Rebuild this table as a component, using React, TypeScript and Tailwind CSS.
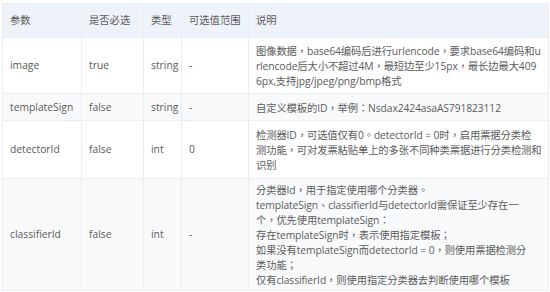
const rows = [
  {
    name: "image",
    required: "true",
    type: "string",
    range: "-",
    desc: [
      "图像数据，base64编码后进行urlencode，要求base64编码和u",
      "rlencode后大小不超过4M，最短边至少15px，最长边最大409",
      "6px,支持jpg/jpeg/png/bmp格式",
    ],
    h: "h-[56px]",
    bg: "bg-white",
  },
  {
    name: "templateSign",
    required: "false",
    type: "string",
    range: "-",
    desc: ["自定义模板的ID，举例：Nsdax2424asaAS791823112"],
    h: "h-[27px]",
    bg: "bg-[#f9fafc]",
  },
  {
    name: "detectorId",
    required: "false",
    type: "int",
    range: "0",
    desc: [
      "检测器ID，可选值仅有0。detectorId = 0时，启用票据分类检",
      "测功能，可对发票粘贴单上的多张不同种类票据进行分类检测和",
      "识别",
    ],
    h: "h-[58px]",
    bg: "bg-white",
  },
  {
    name: "classifierId",
    required: "false",
    type: "int",
    range: "-",
    desc: [
      "分类器Id，用于指定使用哪个分类器。",
      "templateSign、classifierId与detectorId需保证至少存在一",
      "个，优先使用templateSign：",
      "存在templateSign时，表示使用指定模板；",
      "如果没有templateSign而detectorId = 0，则使用票据检测分",
      "类功能；",
      "仅有classifierId，则使用指定分类器去判断使用哪个模板",
    ],
    h: "h-[112px]",
    bg: "bg-[#f9fafc]",
  },
];

const cell = "border border-[#eaedf1] px-[7px] align-middle";

export default function App() {
  return (
    <div className="h-[292px] w-[550px] overflow-hidden bg-white pl-[2px] pt-[3px] font-['Open_Sans','Noto_Sans_CJK_TC',sans-serif] text-[10.3px] leading-[15px] text-[#5a5a5a]">
      <table className="w-[546px] table-fixed border-collapse">
        <colgroup>
          <col className="w-[79px]" />
          <col className="w-[62px]" />
          <col className="w-[38px]" />
          <col className="w-[67px]" />
          <col className="w-[300px]" />
        </colgroup>
        <thead>
          <tr className="h-[34px] bg-[#eef3f9]">
            <th className={`${cell} text-left font-normal`}>参数</th>
            <th className={`${cell} text-left font-normal`}>是否必选</th>
            <th className={`${cell} text-left font-normal`}>类型</th>
            <th className={`${cell} whitespace-nowrap text-left font-normal`}>可选值范围</th>
            <th className={`${cell} text-left font-normal`}>说明</th>
          </tr>
        </thead>
        <tbody>
          {rows.map((r) => (
            <tr key={r.name} className={`${r.h} ${r.bg}`}>
              <td className={cell}>{r.name}</td>
              <td className={cell}>{r.required}</td>
              <td className={cell}>{r.type}</td>
              <td className={cell}>{r.range}</td>
              <td className={`${cell} whitespace-nowrap pt-[2px] tracking-[-0.1px]`}>
                {r.desc.map((line, i) => (
                  <div key={i}>{line}</div>
                ))}
              </td>
            </tr>
          ))}
        </tbody>
      </table>
    </div>
  );
}
